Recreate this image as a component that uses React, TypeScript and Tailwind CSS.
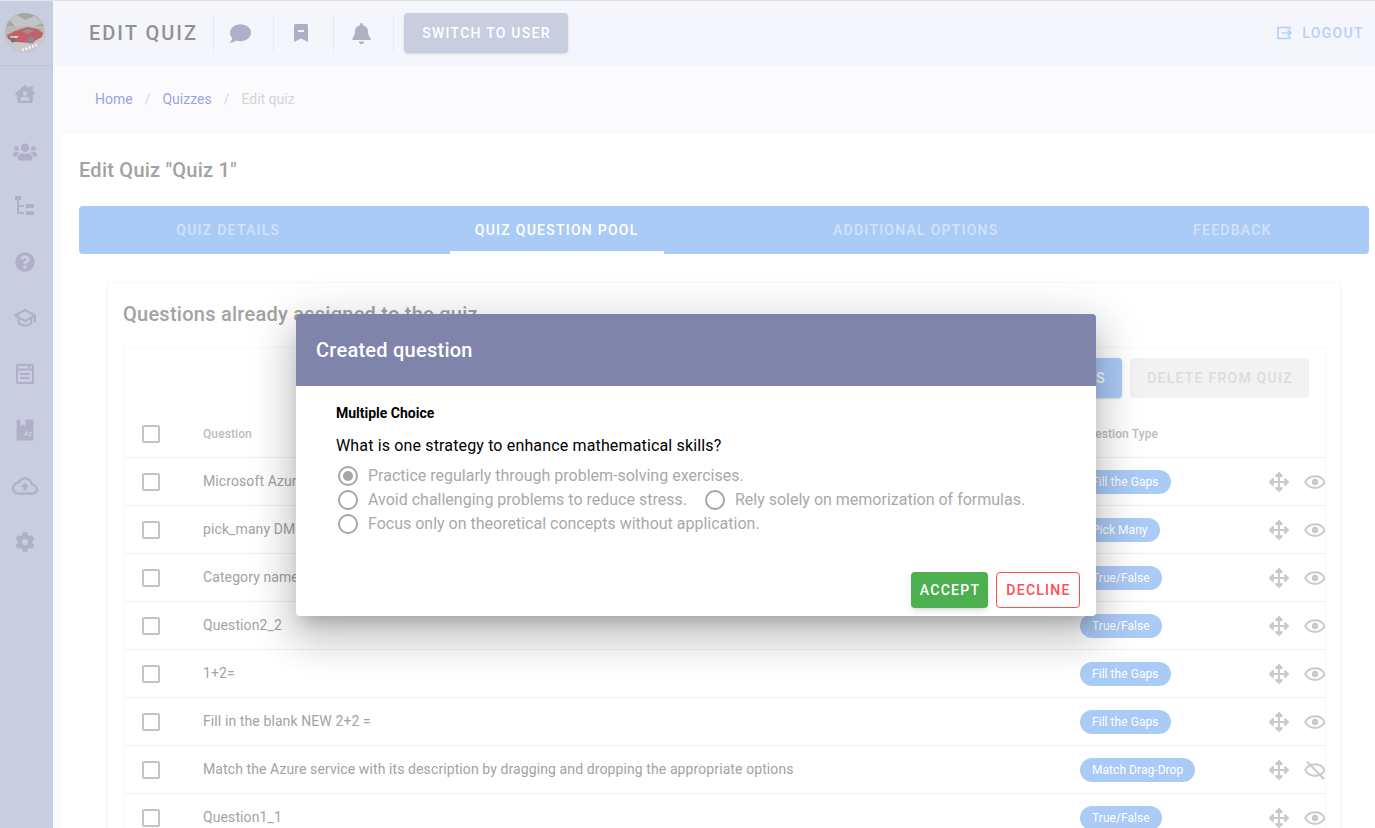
import {
  FaArrowsAlt,
  FaBell,
  FaCog,
  FaComment,
  FaHouseUser,
  FaQuestionCircle,
  FaUsers,
} from "react-icons/fa";
import { MdOutlineCloudUpload } from "react-icons/md";

const QUESTIONS = [
  { text: "Microsoft Azure", type: "Fill the Gaps", hidden: false },
  { text: "pick_many DM", type: "Pick Many", hidden: false },
  { text: "Category name", type: "True/False", hidden: false },
  { text: "Question2_2", type: "True/False", hidden: false },
  { text: "1+2=", type: "Fill the Gaps", hidden: false },
  { text: "Fill in the blank NEW 2+2 =", type: "Fill the Gaps", hidden: false },
  {
    text: "Match the Azure service with its description by dragging and dropping the appropriate options",
    type: "Match Drag-Drop",
    hidden: true,
  },
  { text: "Question1_1", type: "True/False", hidden: false },
];

const TABS = ["QUIZ DETAILS", "QUIZ QUESTION POOL", "ADDITIONAL OPTIONS", "FEEDBACK"];

function Avatar() {
  return (
    <svg width="40" height="40" viewBox="0 0 40 40" className="rounded-full">
      <rect width="40" height="40" fill="#b9bab8" />
      <rect width="40" height="13" fill="#a6a8a2" />
      <path d="M4 6 L12 2 L20 7 L30 3 L38 10 L30 13 L10 14 Z" fill="#c2c4c8" />
      <path d="M0 26 L40 21 L40 40 L0 40 Z" fill="#c9c9cb" />
      <path d="M2 22 L10 18 L22 14 L33 16 L38 20 L37 24 L26 30 L10 29 L3 26 Z" fill="#c2616a" />
      <path d="M16 18 L24 16 L30 18 L22 21 Z" fill="#9c8c90" />
      <path d="M5 23 L14 23 L12 25 L6 25 Z" fill="#dccdd0" />
      <circle cx="8" cy="27" r="2.5" fill="#77737a" />
      <circle cx="26" cy="27" r="3.5" fill="#8c888e" />
      <path d="M17 37 L32 32" stroke="#f4f4f6" strokeWidth="2.5" strokeDasharray="2 1.5" />
    </svg>
  );
}

function TreeIcon() {
  return (
    <svg width="20" height="20" viewBox="0 0 20 20" fill="#b0b0c8">
      <rect x="0" y="0" width="6" height="4" />
      <rect x="2" y="4" width="2" height="14" />
      <rect x="2" y="9" width="7" height="2" />
      <rect x="2" y="16" width="7" height="2" />
      <rect x="11" y="8" width="8" height="4" />
      <rect x="11" y="15" width="8" height="4" />
    </svg>
  );
}

function CapIcon() {
  return (
    <svg width="24" height="20" viewBox="0 0 24 20" fill="none" stroke="#b0b0c8" strokeWidth="2" strokeLinejoin="round">
      <path d="M12 2 L2 7.5 L12 13 L22 7.5 Z" />
      <path d="M5.5 10 V14.5 C8 18.5 16 18.5 18.5 14.5 V10" />
      <path d="M22 7.5 V14" />
    </svg>
  );
}

function NewsIcon() {
  return (
    <svg width="20" height="22" viewBox="0 0 20 22" fill="none" stroke="#b0b0c8" strokeWidth="2">
      <rect x="2" y="2" width="16" height="18" rx="1" />
      <path d="M2 6.5H18M5 11H15M5 15H15" />
      <path d="M12.5 3.5H15.5L14 5.2Z" fill="#b0b0c8" strokeWidth="0.5" />
    </svg>
  );
}

function BookIcon() {
  return (
    <svg width="18" height="22" viewBox="0 0 18 22">
      <path
        d="M1 1H4V8L7 6L10 8V1H17V21H1Z"
        fill="#b0b0c8"
        stroke="#b0b0c8"
        strokeLinejoin="round"
      />
      <text x="8" y="17" fontSize="7" fontFamily="Roboto, sans-serif" fill="#d6d8e6">
        Az
      </text>
    </svg>
  );
}

function BookmarkIcon() {
  return (
    <svg width="14" height="18" viewBox="0 0 14 18">
      <path d="M0 1.5C0 .7.7 0 1.5 0h11c.8 0 1.5.7 1.5 1.5V18l-7-3.6L0 18Z" fill="#afafc6" />
      <rect x="4" y="6" width="6" height="2" fill="#f5f6fb" />
    </svg>
  );
}

function LogoutIcon() {
  return (
    <svg width="15" height="14" viewBox="0 0 15 14" fill="none" stroke="#b5d0fa" strokeWidth="1.6">
      <path d="M12.8 4V1.5H1V12.5H12.8V10" />
      <path d="M4.5 7H14M10.5 3.8 14 7l-3.5 3.2" />
    </svg>
  );
}

function EyeIcon({ off }: { off: boolean }) {
  return (
    <svg width="22" height="22" viewBox="0 0 22 22" fill="none" stroke="#cacaca" strokeWidth="2" className="shrink-0">
      <path d="M1.2 11C3.2 7.4 6.8 5.2 11 5.2S18.8 7.4 20.8 11C18.8 14.6 15.2 16.8 11 16.8S3.2 14.6 1.2 11Z" />
      {off ? (
        <path d="M3 2.5 20 20" />
      ) : (
        <circle cx="11" cy="11" r="3.2" fill="#cacaca" stroke="none" />
      )}
    </svg>
  );
}

function Separator() {
  return <div className="w-px h-[37px] bg-[#e7e9f3]" />;
}

function Radio({ checked = false }: { checked?: boolean }) {
  return (
    <span className="w-5 h-5 rounded-full border-2 border-[#a6a6a6] flex items-center justify-center shrink-0">
      {checked && <span className="w-[10px] h-[10px] rounded-full bg-[#a6a6a6]" />}
    </span>
  );
}

function Option({ label, checked }: { label: string; checked?: boolean }) {
  return (
    <label className="flex items-center gap-[10px] h-6">
      <Radio checked={checked} />
      <span>{label}</span>
    </label>
  );
}

function Checkbox() {
  return <span className="block w-[18px] h-[18px] border-2 border-[#c4c4c4] rounded-[2px]" />;
}

function Sidebar() {
  return (
    <aside className="w-[53px] shrink-0 bg-[#c9cde0] flex flex-col items-center">
      <div className="w-full h-[65px] border-b border-[#c0c4d9] pt-[12px] pl-[5px]">
        <Avatar />
      </div>
      <div className="w-full flex flex-col">
        {[
          <FaHouseUser size={20} />,
          <FaUsers size={24} className="mt-[3px]" />,
          <TreeIcon />,
          <FaQuestionCircle size={20} />,
          <CapIcon />,
          <NewsIcon />,
          <BookIcon />,
          <MdOutlineCloudUpload size={26} />,
          <FaCog size={20} />,
        ].map((icon, i) => (
          <div key={i} className="h-[56px] flex items-center justify-center pr-[3px] text-[#b0b0c8]">
            {icon}
          </div>
        ))}
      </div>
    </aside>
  );
}

function Header() {
  return (
    <header className="h-[64px] shrink-0 bg-[#f5f6fb] flex items-center pl-[36px] pr-[11px]">
      <h1 className="text-[20px] font-medium tracking-[2px] text-[#929292] w-[124px]">EDIT QUIZ</h1>
      <Separator />
      <div className="w-[59px] flex justify-center pr-[6px] text-[#afafc6]">
        <FaComment size={21} />
      </div>
      <Separator />
      <div className="w-[59px] flex justify-center pr-[6px]">
        <BookmarkIcon />
      </div>
      <Separator />
      <div className="w-[59px] flex justify-center pr-[4px] text-[#afafc6]">
        <FaBell size={21} />
      </div>
      <Separator />
      <button className="ml-[10px] h-[40px] w-[164px] pl-px rounded-[4px] bg-[#c9cde0] text-white text-[14px] font-medium tracking-[1.25px] shadow-sm">
        SWITCH TO USER
      </button>
      <button className="ml-auto flex items-center gap-[10px] text-[14px] font-medium tracking-[1.35px] text-[#b5d0fa]">
        <LogoutIcon />
        LOGOUT
      </button>
    </header>
  );
}

function QuestionRow({ text, type, hidden }: { text: string; type: string; hidden: boolean }) {
  return (
    <div className="h-[48px] shrink-0 flex items-center border-t border-[#f1f1f1] text-[14px] tracking-[0.1px] text-[#a4a2a0]">
      <div className="w-[79px] shrink-0 pl-[18px]">
        <Checkbox />
      </div>
      <div className="w-[877px] shrink-0 truncate">{text}</div>
      <div className="w-[185px] shrink-0">
        <span className="inline-flex items-center h-6 px-3 rounded-full bg-[#abcbf7] text-white text-[12px] tracking-[0.05px]">
          {type}
        </span>
      </div>
      <div className="w-[28px] shrink-0 flex justify-center text-[#cacaca]">
        <FaArrowsAlt size={20} />
      </div>
      <div className="ml-[10px] w-[24px] shrink-0 flex justify-center mt-px">
        <EyeIcon off={hidden} />
      </div>
    </div>
  );
}

function QuestionTable() {
  return (
    <section className="ml-[28px] w-[1234px] bg-white border border-[#f8f8f8] rounded-[4px] shadow-[0_1px_4px_rgba(0,0,0,0.03)] pt-[14px] px-[15px]">
      <h3 className="h-[50px] text-[20px] leading-[34px] tracking-[0.25px] font-medium text-[#a4a2a0]">
        Questions already assigned to the quiz
      </h3>
      <div className="w-[1203px] border-x border-t border-[#f8f8f8] overflow-hidden">
        <div className="h-[61px] flex justify-end items-start gap-2 pt-[10px] pr-[16px]">
          <button className="h-[40px] px-4 rounded-[4px] bg-[#abcbf7] text-white text-[14px] font-medium tracking-[1.25px] shadow-sm">
            ADD QUESTIONS
          </button>
          <button className="h-[40px] w-[179px] pl-px rounded-[4px] bg-[#f2f2f2] text-[#dcdcdc] text-[14px] font-medium tracking-[1.25px]">
            DELETE FROM QUIZ
          </button>
        </div>
        <div className="h-[48px] pt-px flex items-center text-[12px] font-medium tracking-[0.1px] text-[#bdbdbd]">
          <div className="w-[79px] shrink-0 pl-[18px]">
            <Checkbox />
          </div>
          <div className="w-[877px] shrink-0">Question</div>
          <div>Question Type</div>
        </div>
        {QUESTIONS.map((q) => (
          <QuestionRow key={q.text} text={q.text} type={q.type} hidden={q.hidden} />
        ))}
      </div>
    </section>
  );
}

function CreatedQuestionDialog() {
  return (
    <div className="absolute left-[296px] top-[314px] w-[800px] h-[302px] bg-white rounded-[4px] overflow-hidden shadow-[0_11px_15px_-7px_rgba(0,0,0,0.2),0_24px_38px_3px_rgba(0,0,0,0.14),0_9px_46px_8px_rgba(0,0,0,0.12)] flex flex-col">
      <div className="h-[72px] shrink-0 bg-[#7e84aa] flex items-center px-[20px] text-white text-[20px] tracking-[0.25px] font-medium">
        Created question
      </div>
      <div className="flex-1 pl-[40px] pt-[18px]">
        <div className="text-[14px] leading-[18px] font-bold text-black">Multiple Choice</div>
        <p className="mt-[14px] text-[16px] leading-[20px] tracking-[0.15px] text-black">
          What is one strategy to enhance mathematical skills?
        </p>
        <div className="mt-[8px] ml-[2px] text-[16px] leading-6 text-[#a9a9a9]">
          <Option label="Practice regularly through problem-solving exercises." checked />
          <div className="flex gap-[18px]">
            <Option label="Avoid challenging problems to reduce stress." />
            <Option label="Rely solely on memorization of formulas." />
          </div>
          <Option label="Focus only on theoretical concepts without application." />
        </div>
      </div>
      <div className="flex justify-end gap-2 pr-[16px] pb-[8px]">
        <button className="h-[36px] w-[77px] pl-px rounded-[4px] bg-[#4caf50] text-white text-[14px] font-medium tracking-[1.25px] shadow-md">
          ACCEPT
        </button>
        <button className="h-[36px] w-[84px] pl-px rounded-[4px] border border-[#ff4d55] text-[#ff4d55] text-[14px] font-medium tracking-[1.25px]">
          DECLINE
        </button>
      </div>
    </div>
  );
}

export default function App() {
  return (
    <div className="relative h-[828px] w-[1375px] overflow-hidden flex flex-col bg-[#fbfbfe] font-['Roboto',sans-serif]">
      <div className="h-px shrink-0 bg-[#e2e2e2]" />
      <div className="flex flex-1 min-h-0">
        <Sidebar />
        <main className="flex-1 min-w-0 flex flex-col">
          <Header />
          <nav className="h-[69px] shrink-0 flex items-center pl-[42px] text-[14px]">
            <span className="text-[#9da3dc]">Home</span>
            <span className="mx-[12px] text-[#d8d8dc]">/</span>
            <span className="text-[#9da3dc]">Quizzes</span>
            <span className="mx-[12px] text-[#d8d8dc]">/</span>
            <span className="text-[#d4d4d8]">Edit quiz</span>
          </nav>
          <div className="ml-[10px] flex-1 bg-white rounded-tl-[4px] pl-[16px] pr-[6px]">
            <h2 className="pt-[21px] h-[72px] text-[20px] leading-[30px] tracking-[0.25px] font-medium text-[#a4a2a0]">
              Edit Quiz "Quiz 1"
            </h2>
            <div className="h-[48px] rounded-[4px] bg-[#abcbf7] flex justify-around overflow-hidden mb-[28px]">
              {TABS.map((tab, i) => (
                <div
                  key={tab}
                  className={
                    i === 1
                      ? "h-full px-[25px] flex items-center border-b-[3px] border-white pt-[3px] text-white text-[14px] font-medium tracking-[1.25px]"
                      : "h-full px-[25px] flex items-center text-[#d2e2fa] text-[14px] font-medium tracking-[1.25px]"
                  }
                >
                  {tab}
                </div>
              ))}
            </div>
            <QuestionTable />
          </div>
        </main>
      </div>
      <CreatedQuestionDialog />
    </div>
  );
}
